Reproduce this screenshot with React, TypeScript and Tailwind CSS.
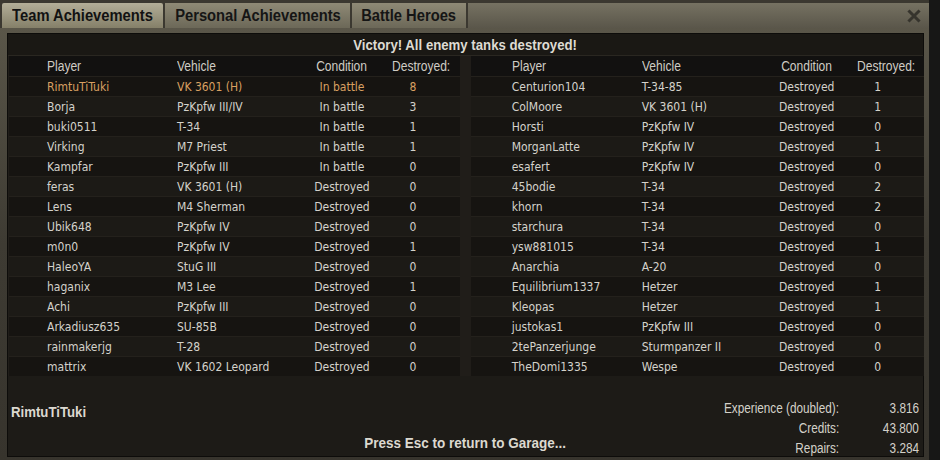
import React from "react";

type Row = { p: string; v: string; c: string; d: string; hl?: boolean };

const left: Row[] = [
  { p: "RimtuTiTuki", v: "VK 3601 (H)", c: "In battle", d: "8", hl: true },
  { p: "Borja", v: "PzKpfw III/IV", c: "In battle", d: "3" },
  { p: "buki0511", v: "T-34", c: "In battle", d: "1" },
  { p: "Virking", v: "M7 Priest", c: "In battle", d: "1" },
  { p: "Kampfar", v: "PzKpfw III", c: "In battle", d: "0" },
  { p: "feras", v: "VK 3601 (H)", c: "Destroyed", d: "0" },
  { p: "Lens", v: "M4 Sherman", c: "Destroyed", d: "0" },
  { p: "Ubik648", v: "PzKpfw IV", c: "Destroyed", d: "0" },
  { p: "m0n0", v: "PzKpfw IV", c: "Destroyed", d: "1" },
  { p: "HaleoYA", v: "StuG III", c: "Destroyed", d: "0" },
  { p: "haganix", v: "M3 Lee", c: "Destroyed", d: "1" },
  { p: "Achi", v: "PzKpfw III", c: "Destroyed", d: "0" },
  { p: "Arkadiusz635", v: "SU-85B", c: "Destroyed", d: "0" },
  { p: "rainmakerjg", v: "T-28", c: "Destroyed", d: "0" },
  { p: "mattrix", v: "VK 1602 Leopard", c: "Destroyed", d: "0" },
];

const right: Row[] = [
  { p: "Centurion104", v: "T-34-85", c: "Destroyed", d: "1" },
  { p: "ColMoore", v: "VK 3601 (H)", c: "Destroyed", d: "1" },
  { p: "Horsti", v: "PzKpfw IV", c: "Destroyed", d: "0" },
  { p: "MorganLatte", v: "PzKpfw IV", c: "Destroyed", d: "1" },
  { p: "esafert", v: "PzKpfw IV", c: "Destroyed", d: "0" },
  { p: "45bodie", v: "T-34", c: "Destroyed", d: "2" },
  { p: "khorn", v: "T-34", c: "Destroyed", d: "2" },
  { p: "starchura", v: "T-34", c: "Destroyed", d: "0" },
  { p: "ysw881015", v: "T-34", c: "Destroyed", d: "1" },
  { p: "Anarchia", v: "A-20", c: "Destroyed", d: "0" },
  { p: "Equilibrium1337", v: "Hetzer", c: "Destroyed", d: "1" },
  { p: "Kleopas", v: "Hetzer", c: "Destroyed", d: "1" },
  { p: "justokas1", v: "PzKpfw III", c: "Destroyed", d: "0" },
  { p: "2tePanzerjunge", v: "Sturmpanzer II", c: "Destroyed", d: "0" },
  { p: "TheDomi1335", v: "Wespe", c: "Destroyed", d: "0" },
];

const sans = "font-['Liberation_Sans',Arial,sans-serif]";

function S({ children, cls }: { children: React.ReactNode; cls: string }) {
  return <span className={`inline-block whitespace-nowrap ${cls}`}>{children}</span>;
}

function Table({ rows, lead }: { rows: Row[]; lead: string }) {
  return (
    <div className="flex-1 flex flex-col">
      <div
        className={`h-[20px] flex items-center bg-[#121110] text-[14px] text-[#cfccc4] ${sans}`}
      >
        <div className={lead} />
        <div className="w-[130px]">
          <S cls="scale-x-[0.86] origin-left">Player</S>
        </div>
        <div className="w-[125px]">
          <S cls="scale-x-[0.86] origin-left">Vehicle</S>
        </div>
        <div className="w-[80px] text-center">
          <S cls="scale-x-[0.86] origin-center">Condition</S>
        </div>
        <div className="pl-[10px]">
          <S cls="scale-x-[0.86] origin-left">Destroyed:</S>
        </div>
      </div>
      {rows.map((r, i) => (
        <div
          key={i}
          className={`h-[20px] flex items-center border-t border-[#24211c] text-[12px] font-['DejaVu_Sans_Condensed','Liberation_Sans',sans-serif] ${
            i % 2 === 0 ? "bg-[#161411]" : "bg-[#1c1a16]"
          } ${r.hl ? "text-[#d9a062]" : "text-[#d4d2cb]"}`}
        >
          <div className={lead} />
          <div className="w-[130px] whitespace-nowrap">{r.p}</div>
          <div className="w-[125px] whitespace-nowrap">{r.v}</div>
          <div className="w-[80px] text-center whitespace-nowrap">{r.c}</div>
          <div className="w-[62px] text-center">{r.d}</div>
        </div>
      ))}
    </div>
  );
}

export default function App() {
  return (
    <div className="w-[940px] h-[460px] bg-[#171716] flex overflow-hidden">
      <div className="w-[929px] h-[460px] pt-[3px] bg-[#3b3830] flex flex-col">
        {/* tab bar */}
        <div className={`h-[25px] flex pl-[2px] gap-[2px] text-[16px] font-bold ${sans}`}>
          <div className="w-[161px] rounded-t-[2px] bg-gradient-to-b from-[#b3ae98] to-[#858069] flex items-center justify-center text-[#121212]">
            <S cls="scale-x-[0.92] origin-center">Team Achievements</S>
          </div>
          <div className="w-[185px] bg-gradient-to-b from-[#8f8a76] to-[#6c6858] flex items-center justify-center text-[#151515]">
            <S cls="scale-x-[0.92] origin-center">Personal Achievements</S>
          </div>
          <div className="w-[114px] bg-gradient-to-b from-[#8f8a76] to-[#6c6858] flex items-center justify-center text-[#151515]">
            <S cls="scale-x-[0.92] origin-center">Battle Heroes</S>
          </div>
          <div className="flex-1 bg-gradient-to-b from-[#767262] to-[#5a564a] flex items-center justify-end pr-[8px]">
            <svg width="14" height="14" viewBox="0 0 14 14">
              <path
                d="M2.5 2.5 L11.5 11.5 M11.5 2.5 L2.5 11.5"
                stroke="#36342d"
                strokeWidth="3"
                strokeLinecap="square"
              />
            </svg>
          </div>
        </div>
        {/* body */}
        <div className="flex-1 min-h-0 flex flex-col bg-gradient-to-b from-[#5a5649] via-[#3e3b33] to-[#37342d] pt-[5px] pl-[7px] pr-[5px] pb-[3px]">
          <div className={`flex-1 min-h-0 flex flex-col bg-[#1d1b17] border border-[#0d0c0a] ${sans}`}>
            <div className="h-[22px] pt-[2px] flex items-center justify-center bg-[#1a1814] text-[15px] font-bold text-[#dedbd2] border-b border-[#2a2721]">
              <S cls="scale-x-[0.88] origin-center">Victory! All enemy tanks destroyed!</S>
            </div>
            <div className="flex gap-[11px] px-[1px] bg-[#201d19]">
              <Table rows={left} lead="w-[38px]" />
              <Table rows={right} lead="w-[41px]" />
            </div>
            <div className="flex-1 min-h-0 grid grid-cols-[1fr_auto_1fr]">
              <div className="pt-[25px] pl-[3px] text-[15px] font-bold text-[#dcd9d0]">
                <S cls="scale-x-[0.88] origin-left">RimtuTiTuki</S>
              </div>
              <div className="self-end pb-[4px] text-[15px] font-bold text-[#dcd9d0]">
                <S cls="scale-x-[0.9] origin-center">Press Esc to return to Garage...</S>
              </div>
              <div className="pt-[22px] flex justify-end pr-[4px] text-[14px] text-[#d4d1c9]">
                <div className="grid grid-cols-[auto_80px] auto-rows-[20px] items-center">
                  <div className="text-right">
                    <S cls="scale-x-[0.84] origin-right">Experience (doubled):</S>
                  </div>
                  <div className="text-right">
                    <S cls="scale-x-[0.84] origin-right">3.816</S>
                  </div>
                  <div className="text-right">
                    <S cls="scale-x-[0.84] origin-right">Credits:</S>
                  </div>
                  <div className="text-right">
                    <S cls="scale-x-[0.84] origin-right">43.800</S>
                  </div>
                  <div className="text-right">
                    <S cls="scale-x-[0.84] origin-right">Repairs:</S>
                  </div>
                  <div className="text-right">
                    <S cls="scale-x-[0.84] origin-right">3.284</S>
                  </div>
                </div>
              </div>
            </div>
          </div>
        </div>
      </div>
    </div>
  );
}
